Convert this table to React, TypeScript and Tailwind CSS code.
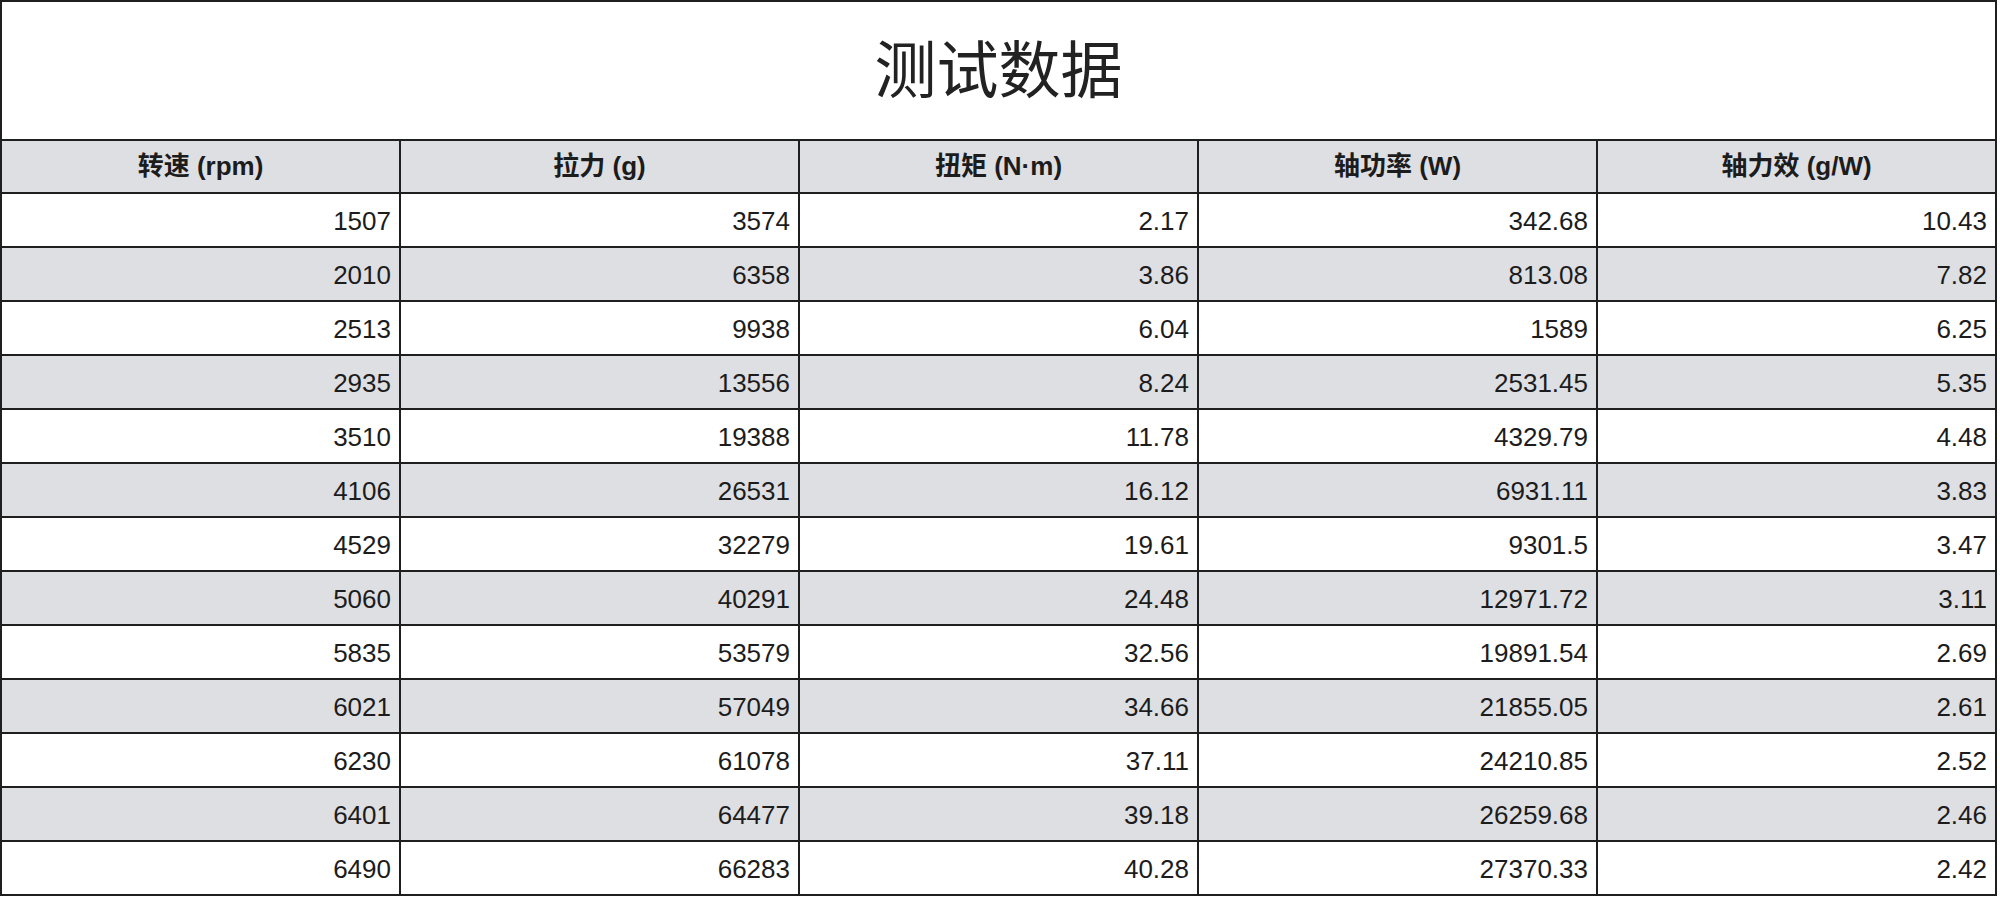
import React from "react";

const headers = ["转速 (rpm)", "拉力 (g)", "扭矩 (N·m)", "轴功率 (W)", "轴力效 (g/W)"];

const rows: string[][] = [
  ["1507", "3574", "2.17", "342.68", "10.43"],
  ["2010", "6358", "3.86", "813.08", "7.82"],
  ["2513", "9938", "6.04", "1589", "6.25"],
  ["2935", "13556", "8.24", "2531.45", "5.35"],
  ["3510", "19388", "11.78", "4329.79", "4.48"],
  ["4106", "26531", "16.12", "6931.11", "3.83"],
  ["4529", "32279", "19.61", "9301.5", "3.47"],
  ["5060", "40291", "24.48", "12971.72", "3.11"],
  ["5835", "53579", "32.56", "19891.54", "2.69"],
  ["6021", "57049", "34.66", "21855.05", "2.61"],
  ["6230", "61078", "37.11", "24210.85", "2.52"],
  ["6401", "64477", "39.18", "26259.68", "2.46"],
  ["6490", "66283", "40.28", "27370.33", "2.42"],
];

const font = { fontFamily: '"Liberation Sans", "Noto Sans CJK SC", Arial, sans-serif' };

export default function App() {
  return (
    <div className="w-[2000px] h-[897px] bg-white text-[#1c1c1c]" style={font}>
      <div className="w-[1997px] border-2 border-[#1f1f1f]">
        <div className="h-[139px] pb-[10px] flex items-center justify-center border-b-2 border-[#1f1f1f]">
          <span
            className="text-[62px] font-normal text-[#222] leading-none"
            style={{ fontFamily: '"Noto Sans CJK SC", "Liberation Sans", sans-serif' }}
          >
            测试数据
          </span>
        </div>
        <div className="grid grid-cols-[399px_399px_399px_399px_1fr]">
          {headers.map((h, i) => (
            <div
              key={h}
              className={
                "h-[53px] flex items-center justify-center bg-[#dedfe3] border-b-2 border-[#1f1f1f] text-[26px] font-bold " +
                (i < 4 ? "border-r-2" : "")
              }
            >
              {h}
            </div>
          ))}
          {rows.map((r, ri) =>
            r.map((c, ci) => (
              <div
                key={ri + "-" + ci}
                className={
                  "flex items-center justify-end pr-[8px] pt-[3px] text-[26px] border-[#1f1f1f] " +
                  (ri % 2 === 1 ? "bg-[#dedfe3] " : "bg-white ") +
                  (ri < rows.length - 1 ? "h-[54px] border-b-2 " : "h-[52px] ") +
                  (ci < 4 ? "border-r-2" : "")
                }
              >
                {c}
              </div>
            ))
          )}
        </div>
      </div>
    </div>
  );
}
